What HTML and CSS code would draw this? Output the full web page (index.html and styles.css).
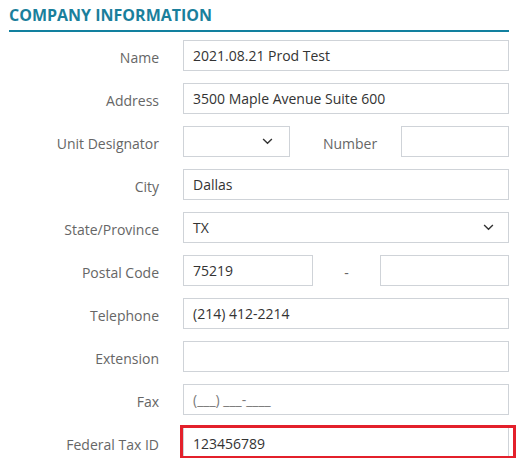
FILE: index.html
```html
<!DOCTYPE html>
<html>
<head>
<meta charset="utf-8">
<link rel="stylesheet" href="styles.css">
</head>
<body>
<div class="panel">
  <h2 class="title">COMPANY INFORMATION</h2>
  <div class="form">
    <label class="lbl">Name</label>
    <div class="field"><div class="input">2021.08.21 Prod Test</div></div>

    <label class="lbl">Address</label>
    <div class="field"><div class="input">3500 Maple Avenue Suite 600</div></div>

    <label class="lbl">Unit Designator</label>
    <div class="field split">
      <div class="input select small"><span></span><svg class="chev" viewBox="0 0 12 8" width="11" height="7"><path d="M1 1.2 L6 6 L11 1.2" fill="none" stroke="#333" stroke-width="1.6"/></svg></div>
      <span class="mid-lbl">Number</span>
      <div class="input num"></div>
    </div>

    <label class="lbl">City</label>
    <div class="field"><div class="input">Dallas</div></div>

    <label class="lbl">State/Province</label>
    <div class="field"><div class="input select"><span>TX</span><svg class="chev" viewBox="0 0 12 8" width="11" height="7"><path d="M1 1.2 L6 6 L11 1.2" fill="none" stroke="#333" stroke-width="1.6"/></svg></div></div>

    <label class="lbl">Postal Code</label>
    <div class="field split">
      <div class="input zip">75219</div>
      <span class="dash">-</span>
      <div class="input zip4"></div>
    </div>

    <label class="lbl">Telephone</label>
    <div class="field"><div class="input">(214) 412-2214</div></div>

    <label class="lbl">Extension</label>
    <div class="field"><div class="input"></div></div>

    <label class="lbl">Fax</label>
    <div class="field"><div class="input placeholder">(___) ___-____</div></div>

    <label class="lbl">Federal Tax ID</label>
    <div class="field highlight"><div class="input">123456789</div></div>
  </div>
</div>
</body>
</html>
```

FILE: styles.css
```css
html, body {
  margin: 0;
  padding: 0;
  background: #ffffff;
}
body {
  font-family: "Open Sans", "Liberation Sans", sans-serif;
  font-size: 14px;
  color: #333333;
}
.panel {
  width: 500px;
  margin-left: 9px;
}
.title {
  margin: 0;
  padding-top: 5px;
  height: 25px;
  font-size: 16px;
  font-weight: 700;
  line-height: 20px;
  color: #1a7f9c;
  border-bottom: 2px solid #12809f;
}
.form {
  display: grid;
  grid-template-columns: 174px 326px;
  grid-auto-rows: 31px;
  row-gap: 12px;
  padding-top: 8px;
}
.lbl {
  display: flex;
  align-items: center;
  justify-content: flex-end;
  padding-right: 24px;
  padding-top: 3px;
  color: #666666;
  font-size: 14px;
}
.field {
  display: flex;
  align-items: stretch;
}
.input {
  box-sizing: border-box;
  flex: 1;
  height: 31px;
  border: 1px solid #cfd3d8;
  padding: 0 9px;
  display: flex;
  align-items: center;
  color: #333333;
  font-size: 14px;
  background: #fff;
}
.placeholder {
  color: #7a7a7a;
}
.select {
  justify-content: space-between;
}
.select .chev {
  margin-right: 5px;
}
.small {
  flex: 0 0 107px;
}
.small .chev {
  margin-right: 7px;
}
.mid-lbl {
  flex: 0 0 111px;
  box-sizing: border-box;
  display: flex;
  align-items: center;
  justify-content: center;
  padding-top: 3px;
  padding-left: 9px;
  color: #666666;
}
.num {
  flex: 0 0 108px;
}
.zip {
  flex: 0 0 130px;
}
.dash {
  flex: 0 0 67px;
  display: flex;
  align-items: center;
  justify-content: center;
  padding-top: 3px;
  color: #666666;
}
.zip4 {
  flex: 0 0 129px;
}
.highlight {
  position: relative;
}
.highlight .input {
  height: 32px;
}
.highlight::after {
  content: "";
  position: absolute;
  left: -3px;
  top: -2px;
  right: -7px;
  bottom: -1px;
  border: 3px solid #e3202b;
  pointer-events: none;
}
```
